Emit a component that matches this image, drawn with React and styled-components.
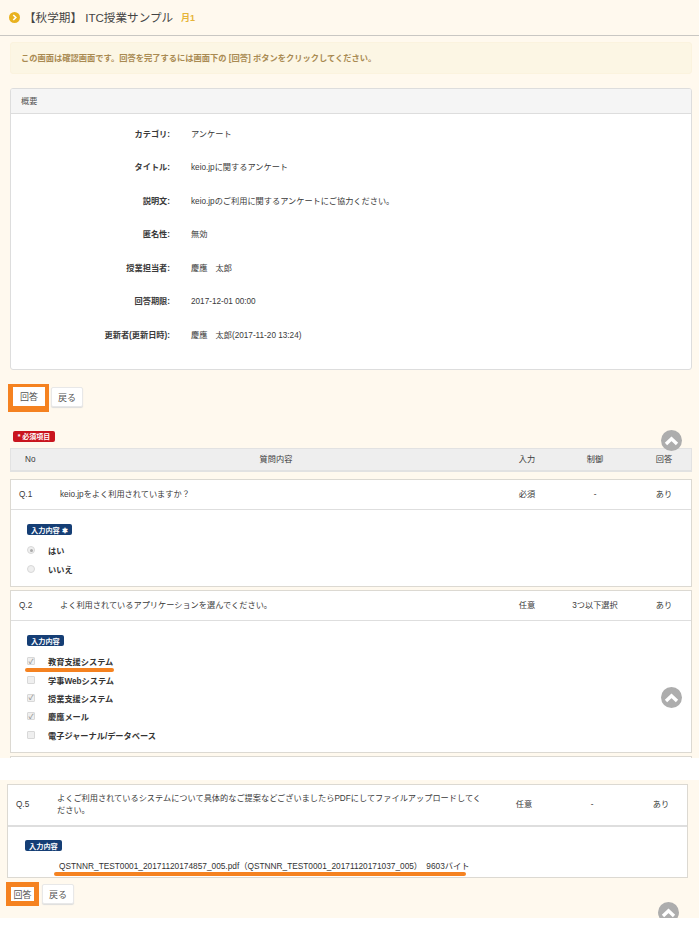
import React from "react";
import styled, { createGlobalStyle } from "styled-components";

const Global = createGlobalStyle`
  html, body { margin: 0; padding: 0; background: #fff; }
  body { font-family: "Liberation Sans", "Noto Sans CJK JP", sans-serif; font-size: 8.2px; color: #3a3a3a; }
  * { box-sizing: border-box; }
`;
const Page = styled.div`width: 700px; height: 931px; overflow: hidden; display: flex; flex-direction: column;`;
const TopSection = styled.section`position: relative; width: 699px; height: 758px; background: #fff9ee; overflow: hidden; flex: none;`;
const Header = styled.header`height: 36px; border-bottom: 1px solid #c9c7c3; display: flex; align-items: center; padding: 0 0 1px 9px;`;
const Bullet = styled.svg`width: 11px; height: 11px; flex: none; margin-right: 4px;`;
const Title = styled.h1`margin: 0; font-size: 11.6px; font-weight: 400; color: #444; white-space: pre;`;
const Term = styled.span`margin-left: 8px; font-size: 9px; color: #e6b437; font-weight: 700;`;
const Notice = styled.div`margin: 6px 7px 0 10px; height: 32px; background: #fcf6e4; border: 1px solid #fbf3de; border-radius: 3px; display: flex; align-items: center; padding: 0 0 2px 10px; color: #a98a52; font-size: 8.25px; font-weight: 700;`;
const Panel = styled.div`margin: 14px 7px 0 10px; height: 282px; background: #fff; border: 1px solid #ddd; border-radius: 3px; overflow: hidden;`;
const PanelHead = styled.div`height: 25px; background: #f5f5f5; border-bottom: 1px solid #ddd; display: flex; align-items: center; padding: 0 0 2px 10px; font-size: 8.2px; color: #555;`;
const Info = styled.dl`margin: 4px 0 0; display: grid; grid-template-columns: 159px 1fr; grid-auto-rows: 33.5px; align-items: center; column-gap: 21px; line-height: 12px;`;
const InfoLabel = styled.dt`font-weight: 700; text-align: right; font-size: 8.2px; color: #3a3a3a;`;
const InfoValue = styled.dd`margin: 0; font-size: 8.2px; color: #3a3a3a;`;
const Actions = styled.div`display: flex; align-items: flex-start; gap: ${p => p.$gap}px; padding-left: ${p => p.$left}px; margin-top: ${p => p.$top}px;`;
const Highlight = styled.span`display: flex; align-items: center; justify-content: center; background: #fff; border-style: solid; border-color: #f58220; border-width: ${p => p.$border}; width: ${p => p.$w}px; height: ${p => p.$h}px; font-size: 9px; color: #555;`;
const Button = styled.span`display: flex; align-items: center; justify-content: center; width: 32px; height: 20px; margin-top: ${p => p.$top}px; background: #fff; border: 1px solid #e8e8e8; border-radius: 2px; box-shadow: 0 1px 1px #ddd; font-size: 9px; color: #555;`;
const Required = styled.span`display: block; margin: 19px 0 0 13px; width: 42px; height: 11px; line-height: 11px; text-align: center; background: #c9151e; color: #fff; border-radius: 2px; font-size: 7px; font-weight: 700;`;
const TableHead = styled.div`margin: 6px 7px 0 10px; height: 24px; background: #eee; border: 1px solid #e2e2e2; border-bottom-width: 2px; display: grid; grid-template-columns: 40px 450px 52px 84px 54px; align-items: center; font-size: 8.2px; color: #3a3a3a;`;
const Cell = styled.span`text-align: ${p => p.$align || "center"}; padding-left: ${p => p.$pad || 0}px; line-height: 12px;`;
const Card = styled.article`margin: ${p => p.$top}px ${p => p.$right}px 0 ${p => p.$left}px; height: ${p => p.$h}px; background: #fff; border: 1px solid #dcd9d2; overflow: hidden;`;
const CardHead = styled.div`height: ${p => p.$h}px; border-bottom: ${p => p.$thick ? 2 : 1}px solid #dedede; display: grid; grid-template-columns: 49px 441px 52px 84px 54px; align-items: center; font-size: 8.2px; color: #3a3a3a;`;
const Question = styled.span`line-height: 12px; padding-right: 12px;`;
const CardBody = styled.div`padding: ${p => p.$top}px 0 0 ${p => p.$left}px;`;
const InputBadge = styled.span`display: inline-flex; align-items: center; gap: 3px; height: 11px; padding: 0 4px; background: #153e75; color: #fff; border-radius: 2px; font-size: 7.2px; font-weight: 700;`;
const Options = styled.div`margin-top: 6px; display: grid; grid-auto-rows: 18.4px; align-items: center;`;
const Option = styled.div`display: flex; align-items: center; font-size: 8.2px; font-weight: 700; color: #333;`;
const Radio = styled.span`width: 8px; height: 8px; border-radius: 50%; margin-right: 13px; background: #efefef; border: 1px solid #d8d8d8; display: flex; align-items: center; justify-content: center; &::after { content: ""; display: ${p => p.$on ? "block" : "none"}; width: 3px; height: 3px; border-radius: 50%; background: #aaa; }`;
const Check = styled.span`width: 8px; height: 8px; border-radius: 1px; margin-right: 13px; background: #efefef; border: 1px solid #d8d8d8; display: flex; align-items: center; justify-content: center; color: #999; font-size: 7px; line-height: 1;`;
const Gap = styled.div`height: 22px; flex: none;`;
const BottomSection = styled.section`position: relative; width: 699px; height: 138px; background: #fff9ee; overflow: hidden; flex: none;`;
const FileLine = styled.div`margin: 9px 0 0 34px; font-size: 8.3px; line-height: 12px; color: #333; white-space: pre;`;
const Underline = styled.span`position: absolute; left: ${p => p.$x}px; top: ${p => p.$y}px; width: ${p => p.$w}px; height: 4px; background: #f58220; border-radius: 2px;`;
const ScrollUp = styled.span`position: absolute; left: ${p => p.$x}px; top: ${p => p.$y}px; width: 21px; height: 21px; border-radius: 50%; background: #adadad; display: flex; align-items: center; justify-content: center;`;

const Chevron = () => (
  <svg width="15" height="10" viewBox="0 0 15 10"><path d="M2 8 7.5 2.8 13 8" fill="none" stroke="#fff" strokeWidth="3.4" /></svg>
);

const info = [
  ["カテゴリ:", "アンケート"],
  ["タイトル:", "keio.jpに関するアンケート"],
  ["説明文:", "keio.jpのご利用に関するアンケートにご協力ください。"],
  ["匿名性:", "無効"],
  ["授業担当者:", "慶應　太郎"],
  ["回答期限:", "2017-12-01 00:00"],
  ["更新者(更新日時):", "慶應　太郎(2017-11-20 13:24)"],
];

function Row({ no, text, kind, rule, thick, h = 30 }) {
  return (
    <CardHead $h={h} $thick={thick}>
      <Cell $align="left" $pad={8}>{no}</Cell>
      <Question>{text}</Question>
      <Cell>{kind}</Cell>
      <Cell>{rule}</Cell>
      <Cell>あり</Cell>
    </CardHead>
  );
}

const Tick = ({ on }) => <Check>{on ? "✓" : ""}</Check>;

export default function App() {
  return (
    <Page>
      <Global />
      <TopSection>
        <Header>
          <Bullet viewBox="0 0 11 11"><circle cx="5.5" cy="5.5" r="5.5" fill="#e9b21f" /><path d="M4.3 3 6.8 5.5 4.3 8" fill="none" stroke="#fff" strokeWidth="1.6" /></Bullet>
          <Title>【秋学期】 ITC授業サンプル</Title>
          <Term>月1</Term>
        </Header>
        <Notice>この画面は確認画面です。回答を完了するには画面下の [回答] ボタンをクリックしてください。</Notice>
        <Panel>
          <PanelHead>概要</PanelHead>
          <Info>
            {info.map(([k, v]) => (
              <React.Fragment key={k}>
                <InfoLabel>{k}</InfoLabel>
                <InfoValue>{v}</InfoValue>
              </React.Fragment>
            ))}
          </Info>
        </Panel>
        <Actions $gap={2} $left={8} $top={14}>
          <Highlight $border="3px 4px 6px 5px" $w={41} $h={28}>回答</Highlight>
          <Button $top={3}>戻る</Button>
        </Actions>
        <Required>* 必須項目</Required>
        <TableHead>
          <Cell $align="left" $pad={14}>No</Cell>
          <Cell>質問内容</Cell>
          <Cell>入力</Cell>
          <Cell>制御</Cell>
          <Cell>回答</Cell>
        </TableHead>
        <Card $top={7} $left={10} $right={7} $h={108}>
          <Row no="Q.1" text="keio.jpをよく利用されていますか？" kind="必須" rule="-" />
          <CardBody $top={14} $left={16}>
            <InputBadge>入力内容 ✱</InputBadge>
            <Options>
              <Option><Radio $on />はい</Option>
              <Option><Radio />いいえ</Option>
            </Options>
          </CardBody>
        </Card>
        <Card $top={3} $left={10} $right={7} $h={163}>
          <Row no="Q.2" text="よく利用されているアプリケーションを選んでください。" kind="任意" rule="3つ以下選択" />
          <CardBody $top={14} $left={16}>
            <InputBadge>入力内容</InputBadge>
            <Options>
              <Option><Tick on />教育支援システム</Option>
              <Option><Tick />学事Webシステム</Option>
              <Option><Tick on />授業支援システム</Option>
              <Option><Tick on />慶應メール</Option>
              <Option><Tick />電子ジャーナル/データベース</Option>
            </Options>
          </CardBody>
        </Card>
        <Card $top={3} $left={10} $right={7} $h={10} />
        <Underline $x={25} $y={668} $w={89} />
        <ScrollUp $x={661} $y={430}><Chevron /></ScrollUp>
        <ScrollUp $x={661} $y={687}><Chevron /></ScrollUp>
      </TopSection>
      <Gap />
      <BottomSection>
        <Card $top={4} $left={7} $right={11} $h={94}>
          <Row no="Q.5" text="よくご利用されているシステムについて具体的なご提案などございましたらPDFにしてファイルアップロードしてください。" kind="任意" rule="-" thick h={42} />
          <CardBody $top={13} $left={17}>
            <InputBadge>入力内容</InputBadge>
            <FileLine>QSTNNR_TEST0001_20171120174857_005.pdf（QSTNNR_TEST0001_20171120171037_005）　9603バイト</FileLine>
          </CardBody>
        </Card>
        <Actions $gap={3} $left={6} $top={4}>
          <Highlight $border="5px" $w={33} $h={24}>回答</Highlight>
          <Button $top={2}>戻る</Button>
        </Actions>
        <Underline $x={54} $y={92} $w={412} />
        <ScrollUp $x={658} $y={122}><Chevron /></ScrollUp>
      </BottomSection>
    </Page>
  );
}
